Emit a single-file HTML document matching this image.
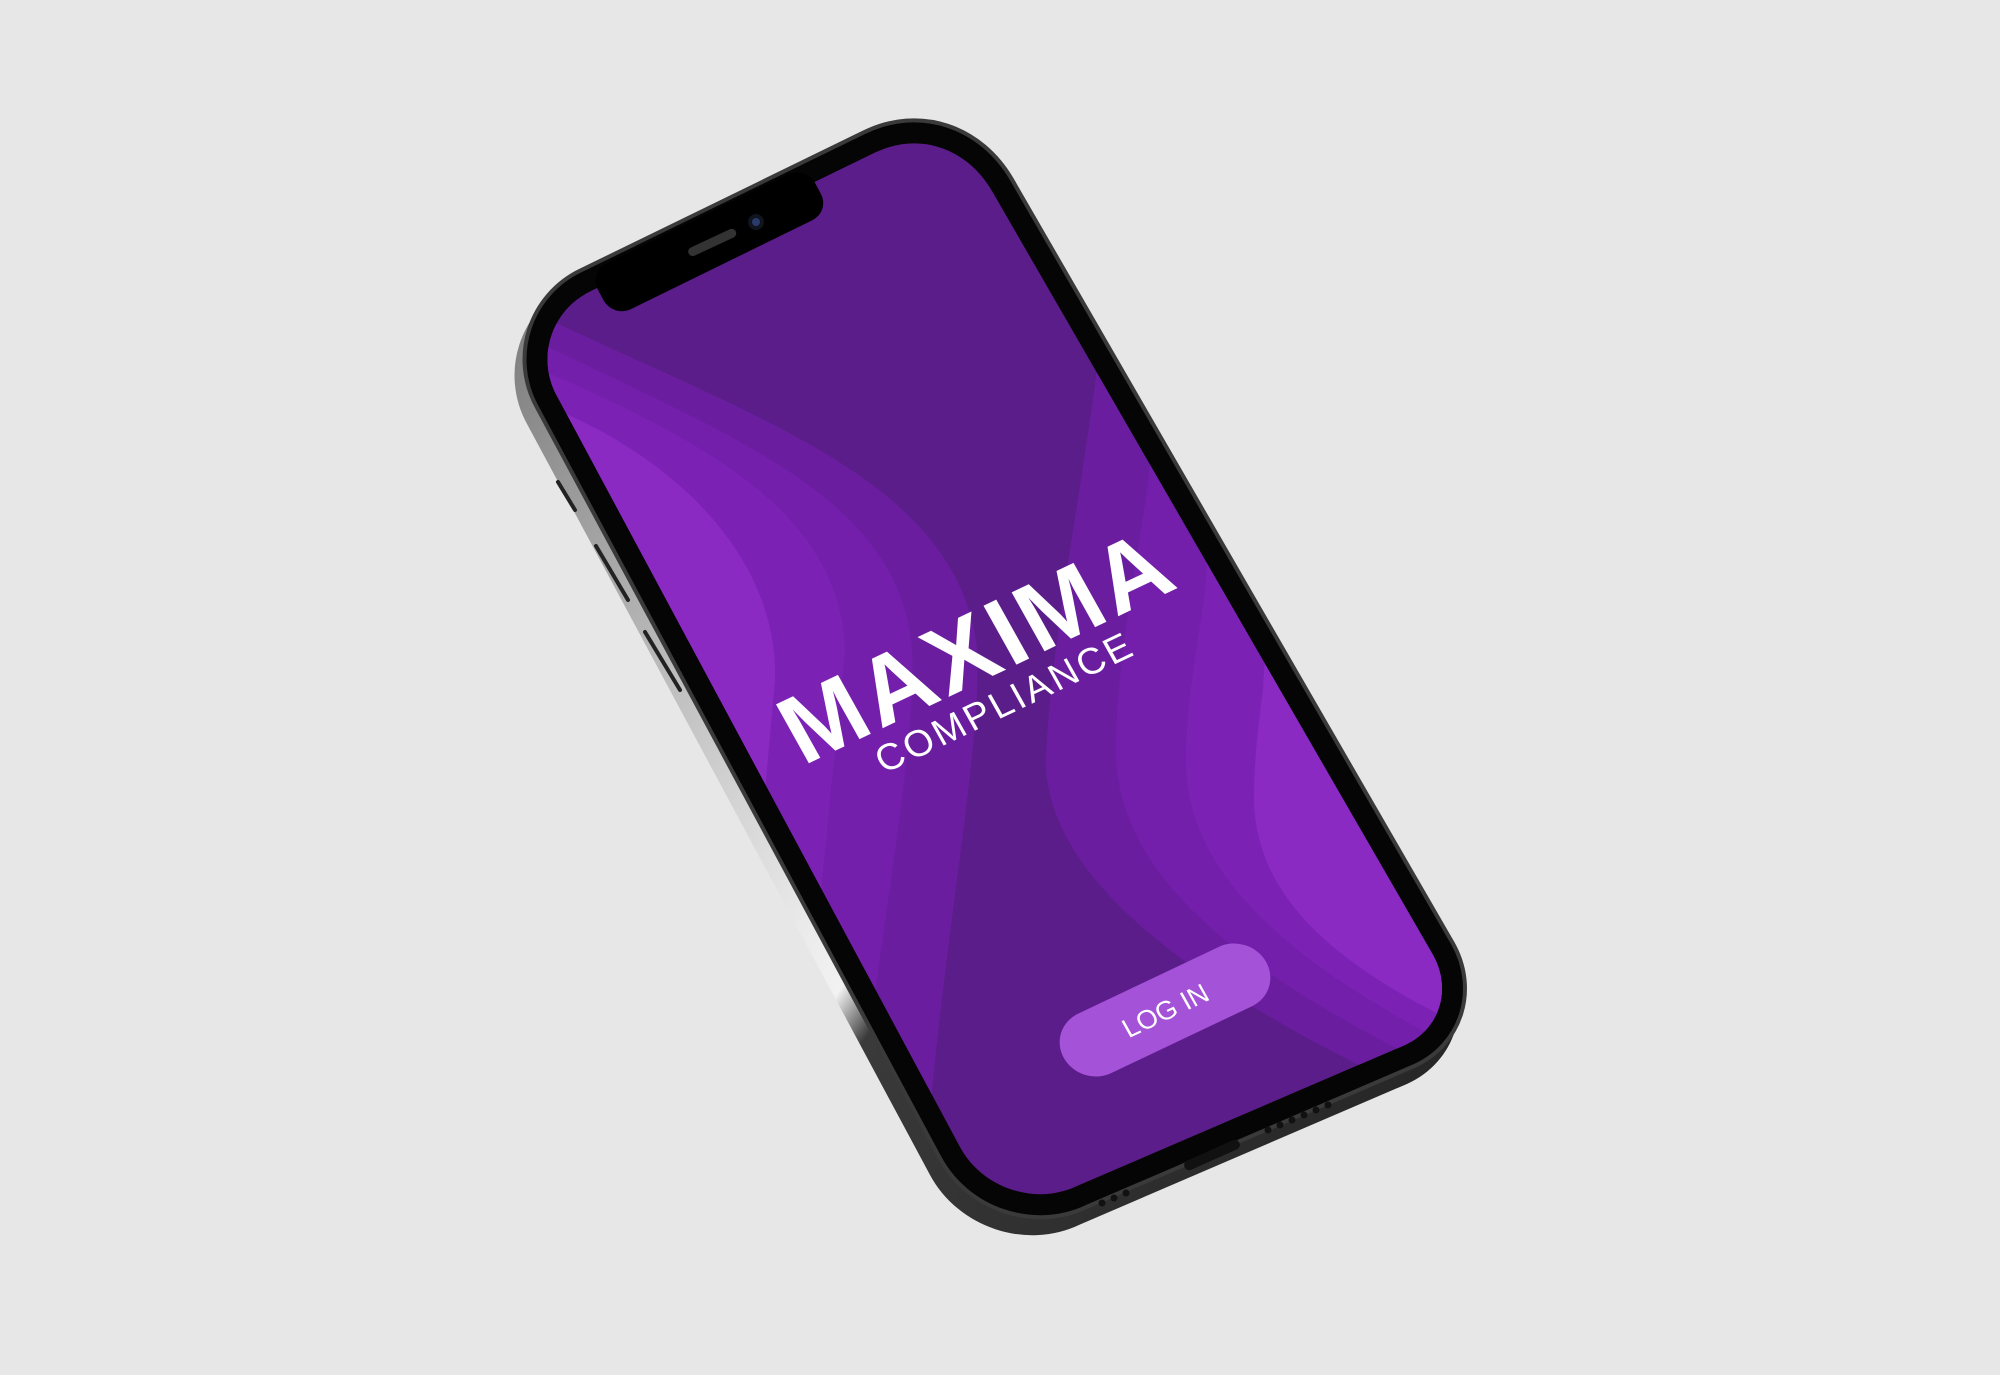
<!DOCTYPE html>
<html><head><meta charset="utf-8"><style>
html,body{margin:0;padding:0;background:#e7e7e7;}
svg{display:block;}
</style></head><body>
<svg width="2000" height="1375" viewBox="0 0 2000 1375" xmlns="http://www.w3.org/2000/svg">
<defs>
<linearGradient id="side" gradientUnits="userSpaceOnUse" x1="500" y1="300" x2="1500" y2="1000">
<stop offset="0" stop-color="#7a7a7a"/>
<stop offset="0.3" stop-color="#c0c0c0"/>
<stop offset="0.5" stop-color="#ebebeb"/>
<stop offset="0.55" stop-color="#f2f2f2"/>
<stop offset="0.59" stop-color="#3a3a3a"/>
<stop offset="1" stop-color="#262626"/>
</linearGradient>
<clipPath id="scr"><path d="M591,291 L874,153 C919,131 967,148 992,191 L1433,955 C1452,989 1440,1029 1405,1045 L1077,1186 C1035,1206 982,1188 960,1147 L557,396 C536,358 551,310 591,291 Z"/></clipPath>
</defs>
<path transform="translate(-8,16)" d="M591,291 L874,153 C919,131 967,148 992,191 L1433,955 C1452,989 1440,1029 1405,1045 L1077,1186 C1035,1206 982,1188 960,1147 L557,396 C536,358 551,310 591,291 Z" fill="url(#side)" stroke="url(#side)" stroke-width="50" stroke-linejoin="round"/>
<path d="M591,291 L874,153 C919,131 967,148 992,191 L1433,955 C1452,989 1440,1029 1405,1045 L1077,1186 C1035,1206 982,1188 960,1147 L557,396 C536,358 551,310 591,291 Z" fill="#000" stroke="#3a3a3a" stroke-width="50" stroke-linejoin="round"/>
<path d="M591,291 L874,153 C919,131 967,148 992,191 L1433,955 C1452,989 1440,1029 1405,1045 L1077,1186 C1035,1206 982,1188 960,1147 L557,396 C536,358 551,310 591,291 Z" fill="#000" stroke="#050505" stroke-width="42" stroke-linejoin="round"/>
<g stroke="#222" stroke-width="4" stroke-linecap="round">
<line x1="558" y1="482" x2="575" y2="510"/>
<line x1="596" y1="546" x2="628" y2="600"/>
<line x1="645" y1="632" x2="680" y2="690"/>
</g>
<g fill="#111">
<rect x="1182" y="1150" width="60" height="10" rx="5" transform="rotate(-24 1212 1155)"/>
<circle cx="1102" cy="1203" r="3.5"/><circle cx="1114" cy="1198" r="3.5"/><circle cx="1126" cy="1193" r="3.5"/>
<circle cx="1268" cy="1130" r="3.5"/><circle cx="1280" cy="1125" r="3.5"/><circle cx="1292" cy="1120" r="3.5"/><circle cx="1304" cy="1115" r="3.5"/><circle cx="1316" cy="1110" r="3.5"/><circle cx="1328" cy="1105" r="3.5"/>
</g>
<g clip-path="url(#scr)">
<rect x="400" y="100" width="1200" height="1200" fill="#5b1d89"/>
<path d="M548,319 C760,420 950,480 976,640 C985,720 950,900 931,1100 L925,1300 L300,1300 L300,280 Z" fill="#6a1e9f"/>
<path d="M542,344 C740,440 900,500 912,650 C916,730 890,880 874,1000 L860,1300 L300,1300 L300,300 Z" fill="#731fab"/>
<path d="M542,370 C700,440 840,510 845,650 L820,900 L800,1300 L300,1300 L300,320 Z" fill="#7b22b5"/>
<path d="M548,406 C680,460 778,560 775,680 L755,900 L740,1300 L300,1300 L300,340 Z" fill="#8a2ac3"/>
<path d="M1110,200 L1097,370 C1080,500 1050,650 1046,760 C1045,880 1200,990 1400,1085 L1600,1200 L1600,200 Z" fill="#6a1e9f"/>
<path d="M1170,200 L1148,485 C1130,600 1116,680 1116,750 C1116,880 1250,975 1420,1060 L1600,1150 L1600,200 Z" fill="#731fab"/>
<path d="M1230,200 L1205,593 C1195,660 1186,710 1186,760 C1186,880 1300,965 1440,1040 L1600,1100 L1600,200 Z" fill="#7b22b5"/>
<path d="M1290,200 L1263,689 C1258,730 1254,760 1254,800 C1256,900 1340,965 1450,1020 L1600,1080 L1600,200 Z" fill="#8a2ac3"/>
</g>
<g transform="matrix(0.898 -0.44 0.47 0.88 597 288)">
<rect x="0" y="-18" width="242" height="52" rx="20" fill="#000"/>
</g>
<rect x="686" y="238" width="52" height="9" rx="4.5" fill="#333" transform="rotate(-25 712 242)"/>
<circle cx="756" cy="222" r="8" fill="#10141c"/>
<circle cx="756" cy="222" r="4" fill="#2a3a6a"/>
<text transform="matrix(0.903 -0.429 0.488 0.873 803 766)" x="0" y="0" font-family="Liberation Sans, sans-serif" font-weight="700" font-size="98" letter-spacing="4" fill="#fff">MAXIMA</text>
<text transform="matrix(0.903 -0.429 0.488 0.873 803 766)" x="67" y="42" font-family="Liberation Sans, sans-serif" font-size="38" letter-spacing="3" fill="#fff">COMPLIANCE</text>
<g transform="matrix(0.903 -0.429 0.488 0.873 1165 1010)">
<rect x="-112" y="-34" width="224" height="68" rx="34" fill="#a452d8"/>
<text x="0" y="10" text-anchor="middle" font-family="Liberation Sans, sans-serif" font-size="27" fill="#fff">LOG IN</text>
</g>
</svg>
</body></html>
